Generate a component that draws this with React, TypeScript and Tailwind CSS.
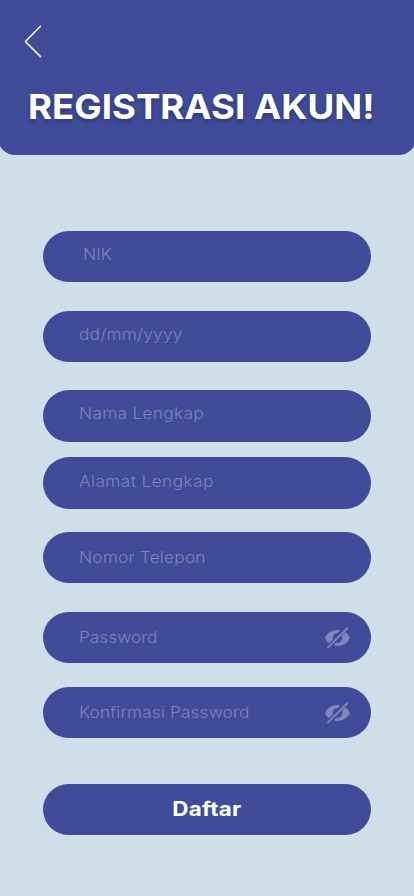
type Field = {
  label: string;
  box: string;
  text: string;
  hidden?: boolean;
};

const fields: Field[] = [
  { label: 'NIK', box: 'mt-[75.8px] h-[51.4px]', text: 'ml-[40px] mb-[5px] tracking-[0.1px]' },
  { label: 'dd/mm/yyyy', box: 'mt-[28.2px] h-[51.4px]', text: 'ml-[36px] mb-[4px] tracking-[0.2px]' },
  { label: 'Nama Lengkap', box: 'mt-[28px] h-[52px]', text: 'ml-[36px] mb-[6px] tracking-[0.27px]' },
  { label: 'Alamat Lengkap', box: 'mt-[15px] h-[52px]', text: 'ml-[36px] mb-[4px] tracking-[0.37px]' },
  { label: 'Nomor Telepon', box: 'mt-[23px] h-[51.4px]', text: 'ml-[36px] mb-[2px] tracking-[0.17px]' },
  { label: 'Password', box: 'mt-[28.4px] h-[51.4px]', text: 'ml-[36px] mb-[2px]', hidden: true },
  { label: 'Konfirmasi Password', box: 'mt-[23.6px] h-[51.4px]', text: 'ml-[36px] mb-px tracking-[0.11px]', hidden: true },
];

function BackIcon() {
  return (
    <svg width="20" height="34" viewBox="0 0 20 34" fill="none" className="block">
      <path d="M17.5 1.3 2.4 16.5 17.5 31.6" stroke="white" strokeWidth="1.5" strokeLinecap="round" strokeLinejoin="round" />
    </svg>
  );
}

function EyeOffIcon() {
  return (
    <svg width="25" height="24" viewBox="0 0 26 24" preserveAspectRatio="none" className="block">
      <path d="M15.8 4.2C14.9 4 14 3.9 13 3.9 6.5 3.9 1.9 8 .3 11.2c-.3.6-.3 1.1 0 1.6.8 1.6 2.2 3.2 4 4.5l4-4.1c-.8-3.4 1.4-6.3 4.7-6.3h.3Z" fill="#7f87bd" />
      <path d="M20.9 6.1c2.3 1.5 3.9 3.4 4.7 5.1.3.6.3 1.1 0 1.6-1.6 3.2-6.2 7.1-12.6 7.1-1.4 0-2.7-.2-3.9-.5l2.5-2.6c4.2.8 7.2-2.6 6.2-6.7Z" fill="#7f87bd" />
      <path d="M2.9 21.6 23.2 2.2" stroke="#7f87bd" strokeWidth="1.9" strokeLinecap="round" />
    </svg>
  );
}

export default function App() {
  return (
    <main className="flex h-[896px] w-[414px] flex-col overflow-hidden bg-[#cfdfe9] font-['Inter','Liberation_Sans',sans-serif]">
      <header className="-mx-[2px] h-[155.3px] shrink-0 rounded-b-[17px] bg-[#404c9a] pl-[25px] pt-[25px]">
        <button aria-label="Kembali" className="block">
          <BackIcon />
        </button>
        <h1 className="mt-[27px] ml-[5px] w-max origin-left scale-x-[1.06] text-[34.5px] font-bold leading-[42px] whitespace-nowrap text-white [text-shadow:0_2px_4px_rgba(0,0,0,0.3)]">
          REGISTRASI AKUN!
        </h1>
      </header>
      <form className="flex flex-col px-[43px]">
        {fields.map((f) => (
          <div key={f.label} className={`flex items-center justify-between rounded-full bg-[#404c9a] pr-[21px] ${f.box}`}>
            <span className={`origin-left scale-x-[1.08] text-[16px] font-light leading-[20px] whitespace-nowrap text-[#7c84bb] ${f.text}`}>{f.label}</span>
            {f.hidden && <EyeOffIcon />}
          </div>
        ))}
        <button type="button" className="mt-[45.3px] flex h-[51.4px] items-center justify-center rounded-full bg-[#404c9a] text-[20px] font-bold text-white">
          <span className="scale-x-[1.12] tracking-[0.2px]">Daftar</span>
        </button>
      </form>
    </main>
  );
}
